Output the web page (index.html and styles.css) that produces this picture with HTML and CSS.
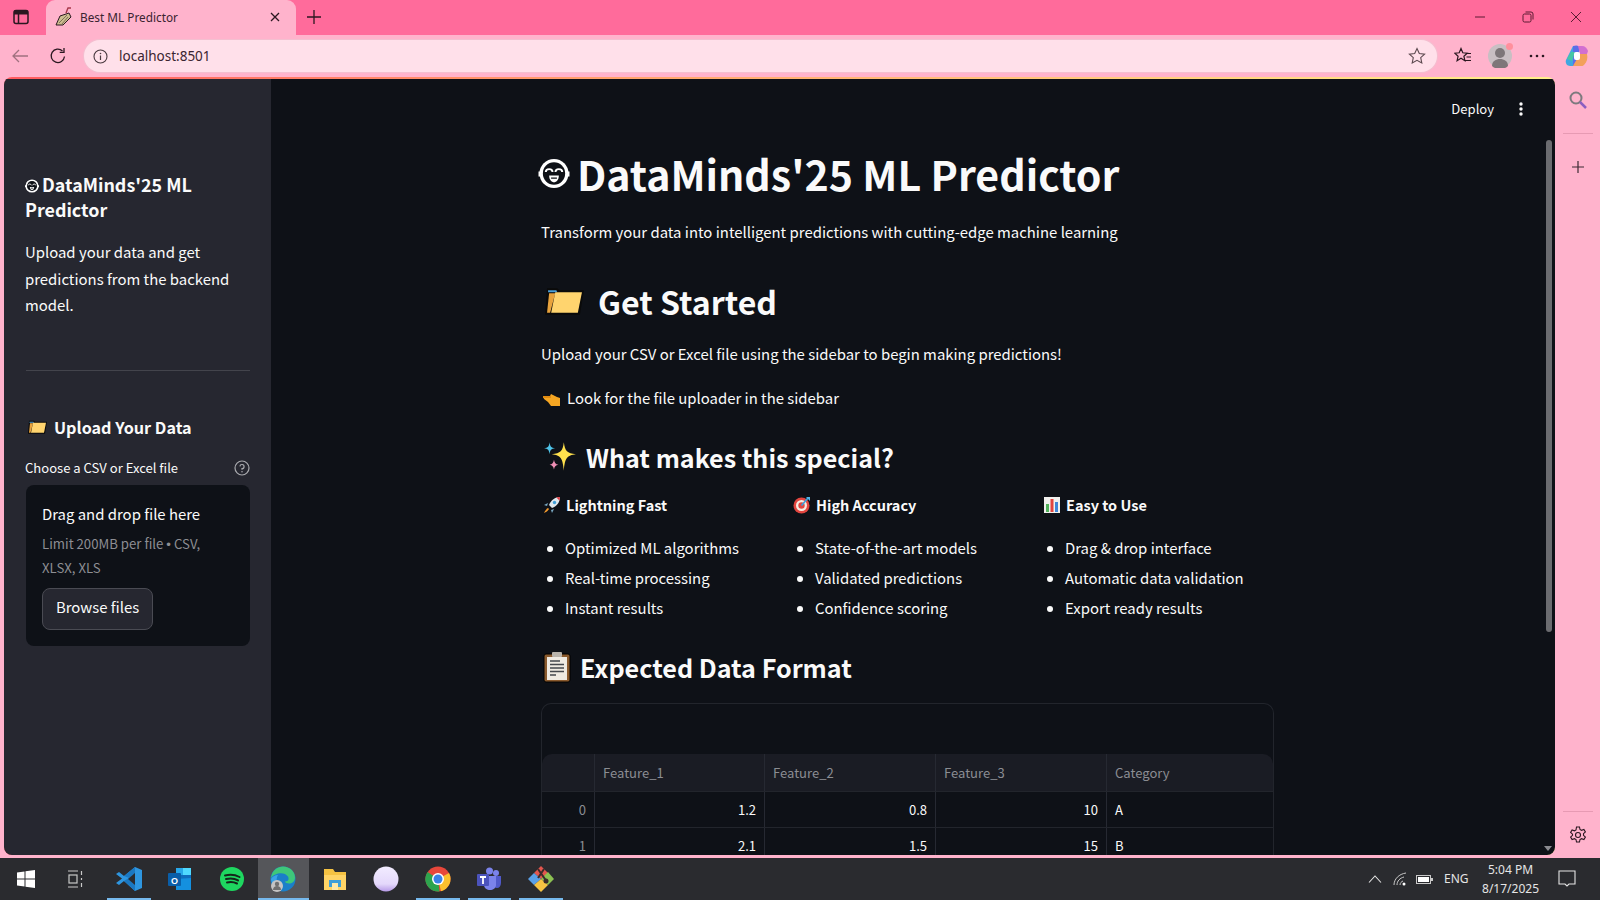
FILE: index.html
```html
<!DOCTYPE html>
<html lang="en">
<head>
<meta charset="utf-8">
<title>Best ML Predictor</title>
<link rel="stylesheet" href="styles.css">
</head>
<body>
<svg class="defs" width="0" height="0" aria-hidden="true">
  <defs>
    <symbol id="folder" viewBox="0 0 38 27">
      <path d="M0 27 2 1h10l2 2h24l-4 24z" fill="#0a0a0a"/>
      <path d="M3 3h8l1 2H3z" fill="#4d9fd6"/>
      <path d="M2 25 4 6h6L5 25z" fill="#e8a33d"/>
      <path d="M6 25 10 5h26l-4 20z" fill="#ffd46e"/>
    </symbol>
    <symbol id="face" viewBox="0 0 32 32">
      <circle cx="16" cy="16" r="15" fill="#fff"/>
      <path d="M0 14h3v5H0zM29 14h3v5h-3z" fill="#fff"/>
      <circle cx="16" cy="16" r="11.500" fill="#0e1117"/>
      <path d="M7.500 14.500c0-4 7-4 7 0M17.500 14.500c0-4 7-4 7 0" fill="none" stroke="#fff" stroke-width="2"/>
      <path d="M11 18h10c0 4.500-2.500 7-5 7s-5-2.500-5-7z" fill="#fff"/>
      <path d="M13 20h6v1.500h-6z" fill="#0e1117"/>
    </symbol>
  </defs>
</svg>

<header class="tabstrip">
  <button class="tab-toggle" aria-label="Tabs">
    <svg width="16" height="16" viewBox="0 0 16 16"><rect x="1" y="1.500" width="14" height="13" rx="2" fill="none" stroke="#2b1720" stroke-width="1.500"/><path d="M1 1.500h14v4H1z" fill="#2b1720"/><path d="M5.500 5v9" stroke="#2b1720" stroke-width="1.500"/></svg>
  </button>
  <div class="tab">
    <svg class="tab-icon" width="18" height="19" viewBox="0 0 18 19"><path d="M1 18 5 9l9-3 2 4-8 8z" fill="#cdbd90" stroke="#2b1720" stroke-width="1"/><path d="M4 16 12 8M7 17l6-7" stroke="#6a5a4a" stroke-width=".8"/><path d="M11 6l2-5h3" fill="none" stroke="#a8384a" stroke-width="1.400"/></svg>
    <span class="tab-title">Best ML Predictor</span>
    <svg class="tab-close" width="10" height="10" viewBox="0 0 10 10"><path d="M1 1l8 8M9 1 1 9" stroke="#2b1720" stroke-width="1.300"/></svg>
  </div>
  <svg class="tab-new" width="16" height="16" viewBox="0 0 16 16"><path d="M8 1v14M1 8h14" stroke="#2b1720" stroke-width="1.300"/></svg>
  <div class="win-controls">
    <svg width="12" height="12" viewBox="0 0 12 12"><path d="M1 6h10" stroke="#5a1d33" stroke-width="1"/></svg>
    <svg width="12" height="12" viewBox="0 0 12 12"><rect x="1" y="3" width="8" height="8" rx="1.500" fill="none" stroke="#5a1d33"/><path d="M3.500 1H9a2 2 0 0 1 2 2v5.500" fill="none" stroke="#5a1d33"/></svg>
    <svg width="12" height="12" viewBox="0 0 12 12"><path d="M1 1l10 10M11 1 1 11" stroke="#5a1d33" stroke-width="1"/></svg>
  </div>
</header>

<nav class="toolbar">
  <svg class="tb-back" width="18" height="16" viewBox="0 0 18 16"><path d="M17 8H2M8 2 2 8l6 6" fill="none" stroke="#a0717f" stroke-width="1.300"/></svg>
  <svg class="tb-reload" width="18" height="18" viewBox="0 0 18 18"><path d="M15.500 9.500A6.700 6.700 0 1 1 13.500 4" fill="none" stroke="#2b1720" stroke-width="1.300"/><path d="M15 1v4.300h-4.300" fill="none" stroke="#2b1720" stroke-width="1.300"/></svg>
  <div class="address">
    <svg width="15" height="15" viewBox="0 0 15 15"><circle cx="7.500" cy="7.500" r="6.500" fill="none" stroke="#4a3a40" stroke-width="1.100"/><path d="M7.500 6.500v4.500" stroke="#4a3a40" stroke-width="1.200"/><circle cx="7.500" cy="4.500" r=".8" fill="#4a3a40"/></svg>
    <span class="address-text">localhost:8501</span>
    <svg class="addr-star" width="18" height="18" viewBox="0 0 18 18"><path d="M9 1.500l2.300 5 5.300.6-3.900 3.600 1.100 5.300L9 13.300 4.200 16l1.100-5.300L1.400 7.100l5.300-.6z" fill="none" stroke="#5d4a50" stroke-width="1.100"/></svg>
  </div>
  <div class="tb-right">
    <svg width="18" height="18" viewBox="0 0 18 18"><path d="M7 1.500l1.800 4.300 4.400.4-3.300 3 1 4.500L7 11.300 3.100 13.700l1-4.500-3.300-3 4.400-.4z" fill="none" stroke="#2b1720" stroke-width="1.200"/><path d="M12 6.500h5M12.500 10h4.500M11 13.500h6" stroke="#2b1720" stroke-width="1.200"/></svg>
    <div class="avatar">
      <svg width="24" height="24" viewBox="0 0 24 24"><circle cx="12" cy="12" r="12" fill="#c8bfc3"/><circle cx="12" cy="9" r="5" fill="#7d7679"/><path d="M4 22c0-5 4-7 8-7s8 2 8 7a12 12 0 0 1-16 0z" fill="#7d7679"/></svg>
      <span class="avatar-dot"></span>
    </div>
    <svg width="16" height="4" viewBox="0 0 16 4"><circle cx="2" cy="2" r="1.300" fill="#2b1720"/><circle cx="8" cy="2" r="1.300" fill="#2b1720"/><circle cx="14" cy="2" r="1.300" fill="#2b1720"/></svg>
    <svg width="24" height="24" viewBox="0 0 24 24"><path d="M8 2h6l-4 20H5C2 22 0 19 1 16z" fill="#3fa7e0"/><path d="M8 2c3-1 6-1 7 2l-4 16c-1 2-2 2-3 2z" fill="#5b6ee8"/><path d="M13 2h4c3 0 5 2 6 5l-1 3h-7z" fill="#d26fd0"/><path d="M9 20 15 10h7c1 4 0 8-3 11-1 1-2 1-3 1H8z" fill="#f3a05b"/><path d="M2 15l4-7h4l-3 9z" fill="#46c6a4"/><rect x="9" y="8" width="6" height="8" rx="2" fill="#fff"/></svg>
  </div>
</nav>

<div class="workspace">
  <div class="app">
    <aside class="sidebar">
      <h2 class="side-title"><svg class="side-face"><use href="#face"/></svg>DataMinds'25 ML Predictor</h2>
      <p class="side-text">Upload your data and get predictions from the backend model.</p>
      <hr class="side-rule">
      <h3 class="side-head"><svg class="side-folder"><use href="#folder"/></svg>Upload Your Data</h3>
      <div class="label-row">
        <span>Choose a CSV or Excel file</span>
        <svg width="16" height="16" viewBox="0 0 16 16"><circle cx="8" cy="8" r="7" fill="none" stroke="#a9aaae" stroke-width="1.200"/><path d="M5.900 6.300A2.100 2.100 0 1 1 8 8.700v1" fill="none" stroke="#a9aaae" stroke-width="1.200"/><circle cx="8" cy="11.700" r=".8" fill="#a9aaae"/></svg>
      </div>
      <div class="dropzone">
        <div class="drop-title">Drag and drop file here</div>
        <div class="drop-limit">
          <div>Limit 200MB per file<span class="bullet">•</span>CSV,</div>
          <div>XLSX, XLS</div>
        </div>
        <button class="browse">Browse files</button>
      </div>
    </aside>
    <main class="main">
      <div class="app-header">
        <span class="deploy">Deploy</span>
        <svg width="4" height="14" viewBox="0 0 4 14"><circle cx="2" cy="2" r="1.700" fill="#fafafa"/><circle cx="2" cy="7" r="1.700" fill="#fafafa"/><circle cx="2" cy="12" r="1.700" fill="#fafafa"/></svg>
      </div>
      <div class="content">
        <h1 class="title"><svg class="title-face"><use href="#face"/></svg>DataMinds'25 ML Predictor</h1>
        <p class="subtitle">Transform your data into intelligent predictions with cutting-edge machine learning</p>
        <h2 class="h-start"><svg class="start-folder"><use href="#folder"/></svg>Get Started</h2>
        <p class="body-line upload-line">Upload your CSV or Excel file using the sidebar to begin making predictions!</p>
        <p class="body-line look-line">
          <svg class="hand" width="18" height="14" viewBox="0 0 18 14"><path d="M0 3h7l1-2 6 3 3 1v8H8L5 9 1 6z" fill="#f5a623"/><path d="M0 3h8v2H0z" fill="#e08a10"/></svg>
          Look for the file uploader in the sidebar
        </p>
        <h2 class="h-special">
          <svg class="sparkles" width="34" height="34" viewBox="0 1 31 31"><path d="M19 3c1 8 3 10 11 11-8 1-10 3-11 15-1-12-3-14-11-15 8-1 10-3 11-11z" fill="#ffe14d"/><path d="M6 3c.5 4 1.500 5 5 5.500-3.500.5-4.500 1.500-5 5.500-.5-4-1.500-5-5-5.500C4.500 8 5.500 7 6 3z" fill="#4fc3e8"/><path d="M10 19c.5 3 1.500 4 4 4.500-2.500.5-3.500 1.500-4 4.500-.5-3-1.500-4-4-4.500 2.500-.5 3.500-1.500 4-4.500z" fill="#ef8fb5"/></svg>
          What makes this special?
        </h2>
        <div class="features">
          <section class="feature">
            <h4 class="feature-head"><svg width="18" height="18" viewBox="0 0 18 18"><path d="M17 1c-5 0-9 3-11 8l3 3c5-2 8-6 8-11z" fill="#dfe8ee"/><path d="M13 1.500c1 .5 3 2 3.500 3.500L17 1z" fill="#e0383e"/><circle cx="11.500" cy="6.500" r="1.700" fill="#3f9fd8"/><path d="M5 7 1 9l3 1zM11 13l-2 4-1-3z" fill="#7aa9c4"/><path d="M5 12c-2 1-3 3-4 5 2-1 4-2 5-4z" fill="#f59b2d"/></svg>Lightning Fast</h4>
            <ul class="feature-list"><li>Optimized ML algorithms</li><li>Real-time processing</li><li>Instant results</li></ul>
          </section>
          <section class="feature">
            <h4 class="feature-head"><svg width="18" height="18" viewBox="0 0 18 18"><circle cx="8.500" cy="9.500" r="8" fill="#e2453f"/><circle cx="8.500" cy="9.500" r="5.500" fill="#f6ece2"/><circle cx="8.500" cy="9.500" r="3.200" fill="#e2453f"/><path d="M8.500 9.500 15 2" stroke="#3f9fd8" stroke-width="1.800"/><path d="M13 1h4v4z" fill="#4fb3e8"/></svg>High Accuracy</h4>
            <ul class="feature-list"><li>State-of-the-art models</li><li>Validated predictions</li><li>Confidence scoring</li></ul>
          </section>
          <section class="feature">
            <h4 class="feature-head"><svg width="18" height="18" viewBox="0 0 18 18"><rect x="1" y="1" width="16" height="16" fill="#f1f1ee"/><rect x="3" y="8" width="3" height="8" fill="#52b35c"/><rect x="7.500" y="3" width="3" height="13" fill="#e2453f"/><rect x="12" y="6" width="3" height="10" fill="#3f86d8"/></svg>Easy to Use</h4>
            <ul class="feature-list"><li>Drag &amp; drop interface</li><li>Automatic data validation</li><li>Export ready results</li></ul>
          </section>
        </div>
        <h2 class="h-format">
          <svg class="clipboard" width="28" height="32" viewBox="0 0 28 32"><rect x="1" y="3" width="26" height="28" rx="2" fill="#8a5a2d" stroke="#000"/><rect x="4" y="6" width="20" height="23" fill="#efeae2"/><rect x="9" y="1" width="10" height="5" rx="1" fill="#b8b3ab"/><path d="M7 10h10M7 13.500h14M7 17h14M7 20.500h14M7 24h6" stroke="#45484d" stroke-width="1.500"/></svg>
          Expected Data Format
        </h2>
        <div class="table-box">
          <div class="table-top"></div>
          <div class="grid-row grid-head">
            <div class="cell"></div><div class="cell">Feature_1</div><div class="cell">Feature_2</div><div class="cell">Feature_3</div><div class="cell">Category</div>
          </div>
          <div class="grid-row">
            <div class="cell idx">0</div><div class="cell num">1.2</div><div class="cell num">0.8</div><div class="cell num">10</div><div class="cell">A</div>
          </div>
          <div class="grid-row">
            <div class="cell idx">1</div><div class="cell num">2.1</div><div class="cell num">1.5</div><div class="cell num">15</div><div class="cell">B</div>
          </div>
        </div>
      </div>
      <div class="scroll-thumb"></div>
      <svg class="scroll-arrow" width="8" height="5" viewBox="0 0 8 5"><path d="M0 0h8L4 5z" fill="#8a8b90"/></svg>
    </main>
  </div>
  <aside class="sidepanel">
    <svg class="sp-search" width="20" height="20" viewBox="0 0 20 20"><circle cx="8" cy="8" r="5.500" fill="none" stroke="#7d7a7e" stroke-width="2"/><path d="M12 12l6 6" stroke="#8b5fc0" stroke-width="2.500"/></svg>
    <div class="sp-rule"></div>
    <svg width="14" height="14" viewBox="0 0 14 14"><path d="M7 1v12M1 7h12" stroke="#3d2a32" stroke-width="1.200"/></svg>
    <div class="sp-spacer"></div>
    <div class="sp-rule"></div>
    <svg width="18" height="18" viewBox="0 0 18 18"><path d="M7.500 1h3l.5 2.500 1.500.8 2.400-.9 1.500 2.600-1.900 1.700v1.600l1.900 1.700-1.500 2.600-2.400-.9-1.500.8-.5 2.500h-3L7 13.500l-1.500-.8-2.400.9-1.500-2.600 1.900-1.700V8.200L1.600 6.500 3.100 3.900l2.400.9L7 4z" fill="none" stroke="#2b1720" stroke-width="1.100"/><circle cx="9" cy="9" r="2.500" fill="none" stroke="#2b1720" stroke-width="1.100"/></svg>
  </aside>
</div>

<footer class="taskbar">
  <div class="slot"><svg width="18" height="18" viewBox="0 0 18 18"><path d="M0 2.500 7.500 1.500v7H0zM8.500 1.300 18 0v8.500H8.500zM0 9.500h7.500v7L0 15.500zM8.500 9.500H18V18l-9.500-1.300z" fill="#fff"/></svg></div>
  <div class="slot slot-view"><svg width="18" height="18" viewBox="0 0 18 18"><path d="M1 1h10M1 17h10M14.500 1v4M14.500 8v2M14.500 13v4" stroke="#c9c9c9" stroke-width="1.200"/><rect x="2" y="5" width="8" height="8" fill="none" stroke="#c9c9c9" stroke-width="1.200"/></svg></div>
  <div class="slot slot-open"><svg width="26" height="26" viewBox="0 0 26 26"><path d="M19 1 26 4v18l-7 3-11-10-5 4-3-2 6-4.500L0 8l3-2 5 4z" fill="#2e96e0"/><path d="M19 1v24l-11-10 5-3-5-2z" fill="#1b78c2"/><path d="M19 7v12l-7-6z" fill="#2a2b2f"/></svg></div>
  <div class="slot"><svg width="24" height="24" viewBox="0 0 24 24"><path d="M8 1h15v22H8z" fill="#0f6cbd"/><path d="M8 1h7v7H8z" fill="#28a8ea"/><path d="M15 1h8v7h-8z" fill="#50d9ff"/><path d="M8 12l15-1v12H8z" fill="#1490df"/><rect x="0" y="6" width="13" height="13" rx="1" fill="#0a5ea8"/><text class="ol-letter" x="6.500" y="16.500">O</text></svg></div>
  <div class="slot"><svg width="24" height="24" viewBox="0 0 24 24"><circle cx="12" cy="12" r="12" fill="#1ed760"/><path d="M5 8.500c5-1.500 10-1 14.500 1.500M6 12c4-1 8.500-.7 12 1.400M7 15.500c3.500-.8 7-.5 10 1" fill="none" stroke="#14261a" stroke-width="2" stroke-linecap="round"/></svg></div>
  <div class="slot slot-active"><svg width="26" height="26" viewBox="0 0 26 26"><circle cx="13" cy="13" r="12.500" fill="#1a7fc9"/><path d="M1 12C2 4 8 .5 13 .5c7 0 12 5 12 11 0 4-3 6-6 6-2 0-4-1-4-2 4 0 4-3 3-5-2-3-6-4-10-3-4 1-6 3-7 4.500z" fill="#3ec77a"/><path d="M10 25c-4-1-8-5-9-12 1-2 4-4 7-4-2 3-2 9 2 16z" fill="#3aa3e8"/><circle cx="7" cy="20" r="6" fill="#c4c4c4"/><circle cx="7" cy="18" r="2.200" fill="#6f6f6f"/><path d="M3 24c0-3 2-4 4-4s4 1 4 4z" fill="#6f6f6f"/></svg></div>
  <div class="slot"><svg width="24" height="23" viewBox="0 0 24 23"><path d="M1 1h9l2 3h11v18H1z" fill="#f5c242"/><path d="M1 7h22v15H1z" fill="#ffd466"/><rect x="6" y="12" width="12" height="7" fill="#3f9fd8"/><rect x="9" y="15" width="6" height="7" fill="#ffe9a8"/></svg></div>
  <div class="slot"><svg width="26" height="26" viewBox="0 0 26 26"><defs><linearGradient id="orb" x1="0" y1="0" x2="0" y2="1"><stop offset="0" stop-color="#f2ecff"/><stop offset=".7" stop-color="#e4d8fb"/><stop offset="1" stop-color="#b79be8"/></linearGradient></defs><circle cx="13" cy="13" r="12.500" fill="url(#orb)"/></svg></div>
  <div class="slot slot-open"><svg width="26" height="26" viewBox="0 0 26 26"><circle cx="13" cy="13" r="12.500" fill="#e8473b"/><path d="M13 13 24 7a12.500 12.500 0 0 1-8 18.200z" fill="#fbc02d"/><path d="M13 13 14.500 25.400A12.500 12.500 0 0 1 2.500 6z" fill="#2da44e"/><circle cx="13" cy="13" r="6" fill="#fff"/><circle cx="13" cy="13" r="4.500" fill="#3b82e8"/></svg></div>
  <div class="slot slot-open"><svg width="24" height="24" viewBox="0 0 24 24"><circle cx="19" cy="6" r="3" fill="#7b83eb"/><circle cx="12.500" cy="4" r="3.500" fill="#7b83eb"/><path d="M16 9h8v7c0 3-2 5-4 5s-4-2-4-5z" fill="#5059c9"/><path d="M7 9h12v9c0 3-3 5-6 5s-6-2-6-5z" fill="#7b83eb"/><rect x="0" y="7" width="12" height="12" rx="1" fill="#4b53bc"/><path d="M3 10h6M6 10v7" stroke="#fff" stroke-width="1.800"/></svg></div>
  <div class="slot slot-open"><svg width="26" height="26" viewBox="0 0 26 26"><path d="M13 0 20 7 13 13 6 7z" fill="#e2564e"/><path d="M20 6l6 7-6 6-7-6z" fill="#8cc152"/><path d="M6 7l7 6-7 6-6-6z" fill="#5aa0e8"/><path d="M13 13l7 6-7 7-7-7z" fill="#f6c343"/><path d="M10 3l9 13M16 3 10 12" stroke="#3b2a2a" stroke-width="2"/><circle cx="18" cy="15" r="2.500" fill="#3b2a2a"/></svg></div>
  <div class="tray">
    <svg width="14" height="8" viewBox="0 0 14 8"><path d="M1 7.500 7 1l6 6.500" fill="none" stroke="#e5e5e5" stroke-width="1.100"/></svg>
    <svg width="14" height="14" viewBox="0 0 14 14"><path d="M1 13C1 7 6 2 13 1M4 13c0-4 3-7 7-8M7 13c0-2 1.500-3.500 3-4" fill="none" stroke="#c9c9c9" stroke-width="1"/><circle cx="11" cy="12" r="1.500" fill="#fff"/></svg>
    <svg width="17" height="9" viewBox="0 0 17 9"><rect x=".5" y=".5" width="14" height="8" fill="none" stroke="#c9c9c9"/><rect x="2" y="2" width="11" height="5" fill="#fff"/><rect x="15" y="3" width="2" height="3" fill="#c9c9c9"/></svg>
    <span class="tray-lang">ENG</span>
    <div class="clock"><span>5:04 PM</span><span>8/17/2025</span></div>
    <svg class="notif" width="18" height="18" viewBox="0 0 18 18"><path d="M1 1h16v13h-6l-2 2-2-2H1z" fill="none" stroke="#e5e5e5" stroke-width="1.100"/></svg>
  </div>
</footer>
</body>
</html>
```

FILE: styles.css
```css
* { box-sizing: border-box; }
html, body { margin: 0; padding: 0; height: 100%; }
body {
  width: 1600px; height: 900px; overflow: hidden;
  display: flex; flex-direction: column;
  background: #ffb3cc;
  font-family: "Noto Sans CJK SC", "Noto Sans CJK JP", "Open Sans", sans-serif;
  color: #fafafa;
}
.defs { position: absolute; }
svg { display: block; flex: none; }

/* browser chrome */
.tabstrip { height: 35px; flex: none; background: #ff6b9b; display: flex; align-items: center; padding-left: 12px; }
.tab-toggle { width: 34px; height: 35px; padding: 0 0 2px 1px; background: none; border: 0; display: flex; align-items: center; }
.tab { width: 250px; height: 35px; background: #ffb3cc; border-radius: 9px 9px 0 0; display: flex; align-items: center; padding: 0 16px 2px 9px; align-self: flex-end; }
.tab-title { font: 11.800px/16px "Noto Sans", sans-serif; color: #3a2430; margin-left: 7px; flex: 1; }
.tab-new { margin: 0 0 2px 10px; }
.win-controls { margin: 0 0 2px auto; display: flex; gap: 36px; width: 126px; }

.toolbar { height: 42px; flex: none; background: #ffb3cc; display: flex; align-items: center; padding-left: 11px; }
.tb-reload { margin-left: 20px; }
.address { width: 1353px; height: 32px; margin-left: 17px; background: #ffe0ea; border-radius: 16px; display: flex; align-items: center; padding: 0 11px 0 9px; box-shadow: 0 0 0 1px #f4bfd0; }
.address-text { font: 13.500px/18px "Noto Sans", sans-serif; color: #3a2430; margin-left: 11px; flex: 1; }
.tb-right { display: flex; align-items: center; margin-left: 17px; }
.tb-right > :nth-child(2) { margin-left: 16px; }
.tb-right > :nth-child(3) { margin-left: 17px; }
.tb-right > :nth-child(4) { margin-left: 20px; }
.avatar { position: relative; }
.avatar-dot { position: absolute; right: -1px; top: -1px; width: 7px; height: 7px; border-radius: 50%; background: #ff8f9c; }

.workspace { height: 781px; flex: none; display: flex; padding-left: 4px; }
.app { width: 1551px; height: 778px; display: flex; overflow: hidden; border-radius: 8px; padding-top: 2px; background: linear-gradient(90deg, #ff5a5f, #ffa36b 40%, #fff08a); }
.sidepanel { width: 45px; display: flex; flex-direction: column; align-items: center; padding: 13px 0 14px; }
.sp-rule { width: 30px; height: 1px; background: #e79ab3; margin: 23px 0 26px; flex: none; }
.sp-spacer { flex: 1; }
.sidepanel .sp-spacer + .sp-rule { margin: 0 0 14px; }

/* sidebar */
.sidebar { width: 267px; flex: none; background: #262730; padding: 93px 21px 0 22px; }
.side-title { margin: 0 0 0 -1px; font-size: 17.900px; line-height: 25px; font-weight: 700; color: #fafafa; }
.side-face { display: inline-block; width: 14px; height: 14px; margin-right: 3px; vertical-align: -1px; }
.side-text { margin: 17px 0 0 -1px; font-size: 14.900px; line-height: 26.600px; color: #fafafa; }
.side-rule { margin: 51px 0 0; height: 1px; border: 0; background: #43444c; }
.side-head { margin: 44px 0 0; display: flex; align-items: center; font-size: 16.200px; line-height: 24px; font-weight: 700; }
.side-folder { width: 19px; height: 14px; margin: 0 7px 0 2px; }
.label-row { display: flex; align-items: center; justify-content: space-between; margin-top: 19px; height: 20px; font-size: 13.050px; line-height: 20px; }
.label-row span { margin-left: -1px; }
.dropzone { margin-top: 7px; height: 161px; background: #0e1117; border-radius: 8px; padding: 17px 16px; }
.drop-title { font-size: 14.900px; line-height: 24px; }
.drop-limit { font-size: 13.200px; line-height: 23.500px; color: #8d8e93; margin-top: 6px; }
.bullet { font-family: "Liberation Sans", sans-serif; display: inline-block; padding: 0 3px; }
.browse { display: block; margin-top: 8px; width: 111px; height: 42px; background: #262730; color: #fafafa; border: 1px solid #4a4b53; border-radius: 8px; font: 14.900px/24px "Noto Sans CJK SC", sans-serif; padding: 0 0 3px; }

/* main */
.main { flex: 1; position: relative; overflow: hidden; background: #0e1117; }
.app-header { height: 58px; display: flex; align-items: center; justify-content: flex-end; gap: 25px; padding-right: 32px; padding-top: 2px; }
.deploy { font-size: 13.050px; line-height: 20px; color: #fafafa; }
.content { width: 733px; margin-left: 270px; }
.title { margin: 8px 0 0; display: flex; align-items: center; font-size: 41.100px; line-height: 56px; font-weight: 700; height: 56px; }
.title-face { width: 32px; height: 31px; margin: 0 7px 0 -3px; }
.subtitle { margin: 18px 0 0; font-size: 14.900px; line-height: 26px; }
.h-start { margin: 33px 0 0; display: flex; align-items: center; height: 46px; font-size: 32.100px; line-height: 46px; font-weight: 700; }
.start-folder { width: 39px; height: 28px; margin: 0 14px 0 4px; }
.body-line { margin: 0; font-size: 14.900px; line-height: 26px; display: flex; align-items: center; }
.upload-line { margin-top: 17px; }
.look-line { margin-top: 18px; }
.hand { margin: 4px 6px 0 2px; }
.h-special { margin: 26px 0 0; display: flex; align-items: center; gap: 9px; padding-left: 2px; height: 40px; font-size: 25.100px; line-height: 40px; font-weight: 700; }
.features { display: grid; grid-template-columns: 250px 250px 233px; margin-top: 16px; }
.feature-head { margin: 0; display: flex; align-items: center; gap: 5px; padding-left: 2px; font-size: 14.500px; line-height: 24px; font-weight: 700; }
.feature-list { margin: 18px 0 0; padding: 0 0 0 24px; font-size: 14.900px; line-height: 26px; }
.feature-list li { margin: 0 0 4px; }
.h-format { margin: 22px 0 0; display: flex; align-items: center; gap: 9px; padding-left: 2px; height: 40px; font-size: 25.150px; line-height: 40px; font-weight: 700; }
.table-box { margin-top: 16px; border: 1px solid #22252c; border-bottom: 0; border-radius: 10px 10px 0 0; }
.table-top { height: 50px; }
.grid-row { display: grid; grid-template-columns: 53px 170px 171px 171px 166px; height: 36px; border-top: 1px solid #22252c; }
.grid-head { background: #1a1c24; color: #8b8d93; border-top: 0; height: 37px; border-radius: 10px 10px 0 0; }
.cell { font-size: 13.050px; line-height: 35px; padding: 0 8px; border-right: 1px solid #262932; white-space: nowrap; }
.cell:last-child { border-right: 0; }
.grid-head .cell { line-height: 37px; }
.num { text-align: right; }
.idx { text-align: right; color: #8b8d93; }
.scroll-thumb { position: absolute; right: 3px; top: 61px; width: 6px; height: 492px; background: #6b6c70; border-radius: 3px; }
.scroll-arrow { position: absolute; right: 3px; bottom: 4px; }

/* taskbar */
.taskbar { height: 42px; flex: none; background: #2a2b2f; display: flex; align-items: center; }
.slot { width: 51.500px; height: 42px; flex: none; display: flex; align-items: center; justify-content: center; position: relative; }
.slot-view { padding-right: 2px; }
.slot-open::after, .slot-active::after { content: ""; position: absolute; left: 4px; right: 4px; bottom: 0; height: 2px; background: #76b9ed; }
.slot-active { background: #55565a; }
.slot-active::after { left: 0; right: 0; }
.ol-letter { font: 700 9px "Liberation Sans", sans-serif; fill: #fff; text-anchor: middle; }
.tray { margin-left: auto; display: flex; align-items: center; width: 236px; height: 42px; flex: none; }
.tray svg:nth-child(1) { margin-right: 11px; margin-left: 4px; }
.tray svg:nth-child(2) { margin-right: 9px; }
.tray-lang { font: 12px/16px "Noto Sans", sans-serif; color: #e5e5e5; margin-left: 11px; }
.clock { display: flex; flex-direction: column; align-items: center; width: 64px; margin-left: 10px; font: 12px/19px "Noto Sans", sans-serif; color: #e5e5e5; }
.notif { margin-left: 15px; }
```
